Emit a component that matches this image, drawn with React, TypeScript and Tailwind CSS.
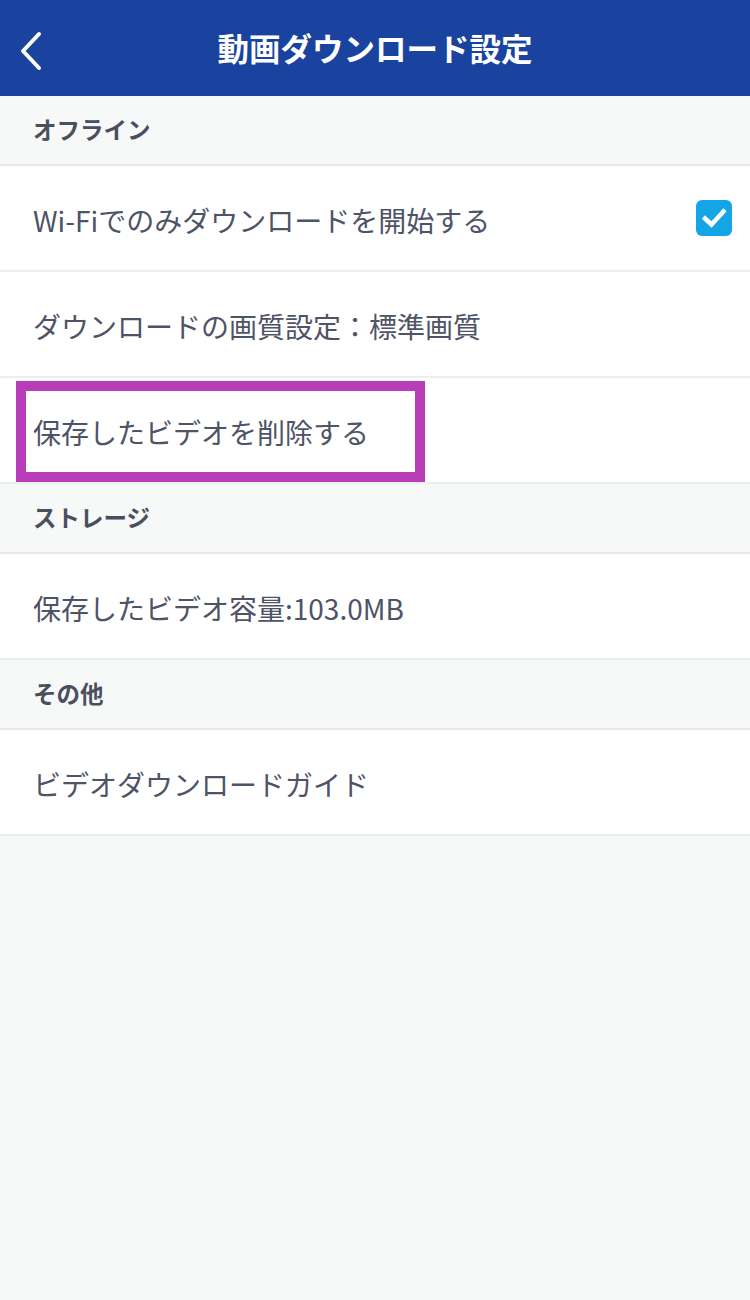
import React from "react";

const font = { fontFamily: '"Noto Sans CJK JP", "Noto Sans", sans-serif' };

function Section({ title }: { title: string }) {
  return (
    <div className="box-border h-[70px] border-b-2 border-[#e6e9ec] bg-[#f7f8f8] flex items-center pl-[33px]">
      <span className="text-[23.5px] font-bold text-[#4a4f5e] leading-none">{title}</span>
    </div>
  );
}

function Row({ text, children, highlight }: { text: string; children?: React.ReactNode; highlight?: boolean }) {
  return (
    <div className="relative box-border h-[106px] border-b-2 border-[#eceef1] bg-white flex items-center pl-[33px] pr-[18px]">
      <span className="text-[28px] text-[#4e5366] leading-none flex-1 pt-[3px]">{text}</span>
      {children}
      {highlight && (
        <div className="absolute left-[16px] top-[3px] w-[409px] h-[101px] border-[10px] border-[#b83db8] box-border pointer-events-none" />
      )}
    </div>
  );
}

export default function App() {
  return (
    <div className="w-[750px] min-h-[1300px] bg-[#f7f8f8]" style={font}>
      <div className="relative h-[96px] bg-[#1a43a0] flex items-center justify-center">
        <svg className="absolute left-[16px] top-[31px]" width="30" height="40" viewBox="0 0 30 40" fill="none">
          <path d="M23 3 L7 20 L23 37" stroke="white" strokeWidth="4" strokeLinecap="round" strokeLinejoin="round" />
        </svg>
        <span className="text-white text-[31.5px] font-bold leading-none">動画ダウンロード設定</span>
      </div>
      <Section title="オフライン" />
      <Row text="Wi-Fiでのみダウンロードを開始する">
        <div className="w-[36px] h-[36px] rounded-[6px] bg-[#14a5e6] flex items-center justify-center">
          <svg width="26" height="26" viewBox="0 0 26 26" fill="none">
            <path d="M4 13.5 L10.5 19.5 L22.5 6.5" stroke="white" strokeWidth="4.5" strokeLinecap="square" />
          </svg>
        </div>
      </Row>
      <Row text="ダウンロードの画質設定：標準画質" />
      <Row text="保存したビデオを削除する" highlight />
      <Section title="ストレージ" />
      <Row text="保存したビデオ容量:103.0MB" />
      <Section title="その他" />
      <Row text="ビデオダウンロードガイド" />
    </div>
  );
}
